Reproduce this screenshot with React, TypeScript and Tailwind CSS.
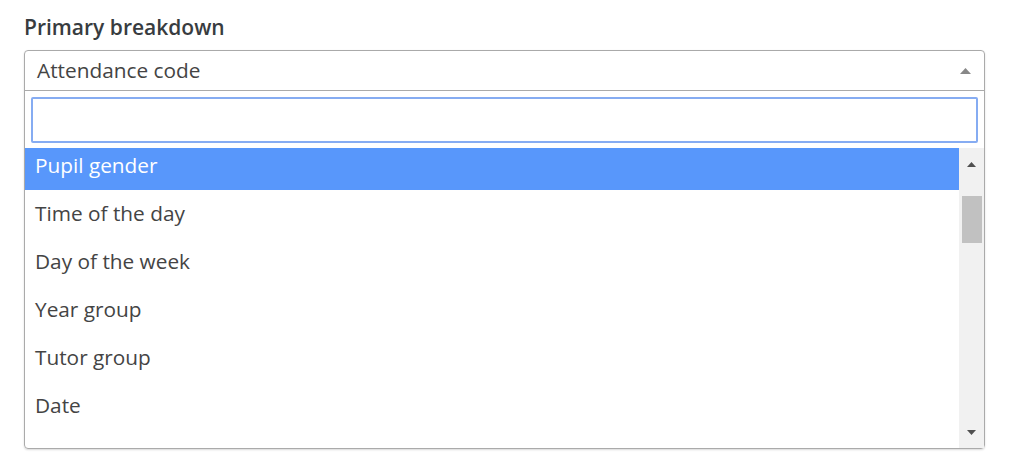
import React from 'react'

const options = ['Pupil gender', 'Time of the day', 'Day of the week', 'Year group', 'Tutor group', 'Date']

export default function App() {
  const selected = 'Pupil gender'

  return (
    <div className="min-h-screen bg-white px-6 pt-[13px] font-['Open_Sans',sans-serif]">
      <label className="block text-[21px] font-semibold leading-[28px] text-[#383c40]">
        Primary breakdown
      </label>
      <div className="mt-[9px] w-[961px] rounded-[4px] border border-[#aaa] shadow-[0_1px_2px_rgba(0,0,0,0.15)]">
        {/* 選択中の値 */}
        <div className="flex h-[40px] items-center justify-between border-b border-[#aaa] pl-3 pr-[10px]">
          <span className="text-[20.8px] leading-none text-[#444]">Attendance code</span>
          <svg width="11" height="6" viewBox="0 0 11 6" className="mr-[3px]">
            <path d="M0 6 L5.5 0 L11 6 Z" fill="#888" />
          </svg>
        </div>

        {/* 検索ボックス */}
        <div className="px-[6px] pt-[6px] pb-[5px]">
          <input
            type="text"
            className="block h-[46px] w-full rounded-[2px] border-2 border-[#86acf2] bg-white outline-none"
          />
        </div>

        {/* 選択肢リスト */}
        <div className="flex h-[300px]">
          <div className="flex-1 overflow-hidden">
            <ul className="mt-[-6px]">
              {options.map((option) => (
                <li
                  key={option}
                  className={`flex h-12 items-center pl-[10px] text-[20.8px] ${
                    option === selected ? 'bg-[#5897fb] text-white' : 'text-[#444]'
                  }`}
                >
                  {option}
                </li>
              ))}
            </ul>
          </div>

          {/* スクロールバー */}
          <div className="flex w-[25px] flex-col items-center bg-[#f1f1f1]">
            <div className="flex h-[30px] items-center justify-center pt-[2px]">
              <svg width="9" height="5" viewBox="0 0 9 5">
                <path d="M0 5 L4.5 0 L9 5 Z" fill="#505050" />
              </svg>
            </div>
            <div className="mt-[18px] h-[47px] w-[20px] bg-[#c1c1c1]" />
            <div className="flex-1" />
            <div className="flex h-[30px] items-center justify-center pb-[2px]">
              <svg width="9" height="5" viewBox="0 0 9 5">
                <path d="M0 0 L4.5 5 L9 0 Z" fill="#505050" />
              </svg>
            </div>
          </div>
        </div>
      </div>
    </div>
  )
}
